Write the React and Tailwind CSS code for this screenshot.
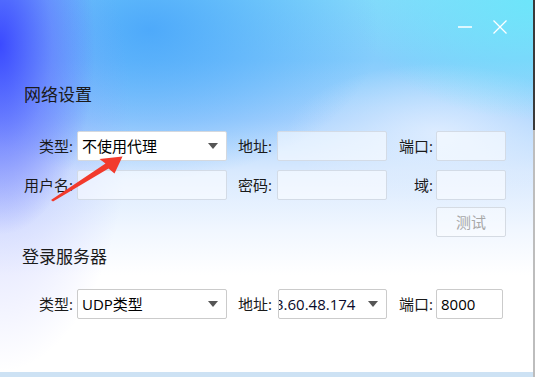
import React from "react";

const font = "font-['Open_Sans','Noto_Sans_CJK_SC',sans-serif]";

const Caret = () => (
  <svg width="10" height="6" viewBox="0 0 10 6">
    <polygon points="0,0 10,0 5,6" fill="#555" />
  </svg>
);

const Label = ({ children, className = "" }) => (
  <div className={`text-right text-[15px] leading-none text-[#1a1a1a] whitespace-nowrap ${className}`}>
    {children}
  </div>
);

const Field = ({ className = "" }) => (
  <div
    className={`h-[30px] rounded-[2px] border border-[#d3dbe6] bg-white/55 ${className}`}
  />
);

export default function App() {
  return (
    <div className={`flex w-[535px] h-[377px] overflow-hidden ${font}`}>
      <div className="flex flex-col w-[533px]">
        <div className="relative h-[372px] bg-[radial-gradient(ellipse_95px_190px_at_0%_12%,#3b4aff_0%,rgba(95,110,255,0.55)_55%,rgba(120,140,255,0)_100%),radial-gradient(ellipse_130px_260px_at_0%_30%,rgba(140,150,255,0.45)_0%,rgba(140,150,255,0)_100%),radial-gradient(ellipse_230px_150px_at_28%_8%,rgba(72,165,250,0.9)_0%,rgba(72,165,250,0)_100%),radial-gradient(ellipse_180px_120px_at_100%_0%,rgba(108,230,250,0.95)_0%,rgba(108,230,250,0)_100%),radial-gradient(ellipse_150px_70px_at_82%_36%,rgba(225,238,255,0.9)_0%,rgba(225,238,255,0)_100%),linear-gradient(to_bottom,#84d9fb_0%,#85cdfc_16%,#aad3fe_32%,#d8e9fe_46%,#f1f7ff_62%,#ffffff_74%)]">
          {/* title bar */}
          <div className="flex justify-end items-center gap-[21px] pt-[13px] pr-[26px] h-[40px]">
            <svg width="14" height="14" viewBox="0 0 14 14">
              <line x1="0" y1="7" x2="14" y2="7" stroke="white" strokeWidth="1.5" />
            </svg>
            <svg width="14" height="14" viewBox="0 0 14 14">
              <line x1="0.5" y1="0.5" x2="13.5" y2="13.5" stroke="white" strokeWidth="1.3" />
              <line x1="13.5" y1="0.5" x2="0.5" y2="13.5" stroke="white" strokeWidth="1.3" />
            </svg>
          </div>

          <div className="mt-[43px] pl-[24px] h-[24px] text-[17px] leading-[24px] text-[#1a1a1a]">
            网络设置
          </div>

          {/* network settings */}
          <div className="mt-[24px] grid grid-cols-[77px_150px_50px_110px_49px_70px] grid-rows-[30px_30px] gap-y-[9px] items-center">
            <Label className="pr-[4px]">类型:</Label>
            <div className="h-[30px] rounded-[2px] border border-[#d4d8de] bg-white flex items-center justify-between pl-[4px] pr-[8px]">
              <span className="text-[15px] text-black leading-none">不使用代理</span>
              <Caret />
            </div>
            <Label className="pr-[5px]">地址:</Label>
            <Field />
            <Label className="pr-[3px]">端口:</Label>
            <Field />

            <Label className="pr-[4px]">用户名:</Label>
            <Field />
            <Label className="pr-[5px]">密码:</Label>
            <Field />
            <Label className="pr-[3px]">域:</Label>
            <Field />
          </div>

          <div className="mt-[7px] flex justify-end pr-[27px]">
            <div className="w-[70px] h-[30px] rounded-[2px] border border-[#d5dbe3] bg-white/40 flex items-center justify-center text-[15px] text-[#a8a8a8]">
              测试
            </div>
          </div>

          <div className="mt-[8px] pl-[22px] h-[24px] text-[17px] leading-[24px] text-[#1a1a1a]">
            登录服务器
          </div>

          {/* login server */}
          <div className="mt-[20px] grid grid-cols-[77px_150px_51px_109px_49px_67px] items-center">
            <Label className="pr-[4px]">类型:</Label>
            <div className="h-[30px] rounded-[2px] border border-[#cbcbcb] bg-white flex items-center justify-between pl-[4px] pr-[8px]">
              <span className="text-[15px] text-black leading-none">UDP类型</span>
              <Caret />
            </div>
            <Label className="pr-[6px]">地址:</Label>
            <div className="h-[30px] rounded-[2px] border border-[#cbcbcb] bg-white flex items-center pr-[8px] gap-[6px]">
              <div className="flex-1 overflow-hidden flex">
                <span className="-ml-[4px] text-[15px] text-[#0a0a2a] leading-none whitespace-nowrap">3.60.48.174</span>
              </div>
              <Caret />
            </div>
            <Label className="pr-[3px]">端口:</Label>
            <div className="h-[30px] rounded-[2px] border border-[#cbcbcb] bg-white flex items-center pl-[4px]">
              <span className="text-[15px] text-black leading-none">8000</span>
            </div>
          </div>

          {/* red annotation arrow */}
          <svg className="absolute left-0 top-0 pointer-events-none" width="533" height="372">
            <polygon
              points="51,200 105.5,163.5 99.5,159 122.5,156.5 114.5,173.5 108.5,168.5 53,201.5"
              fill="#f23a2c"
            />
          </svg>
        </div>
        <div className="h-[5px] bg-[#cde2f4]" />
      </div>
      <div className="w-[2px] flex flex-col">
        <div className="h-[130px] bg-[#3a3a3a]" />
        <div className="flex-1 bg-[#bdbdbd]" />
      </div>
    </div>
  );
}
